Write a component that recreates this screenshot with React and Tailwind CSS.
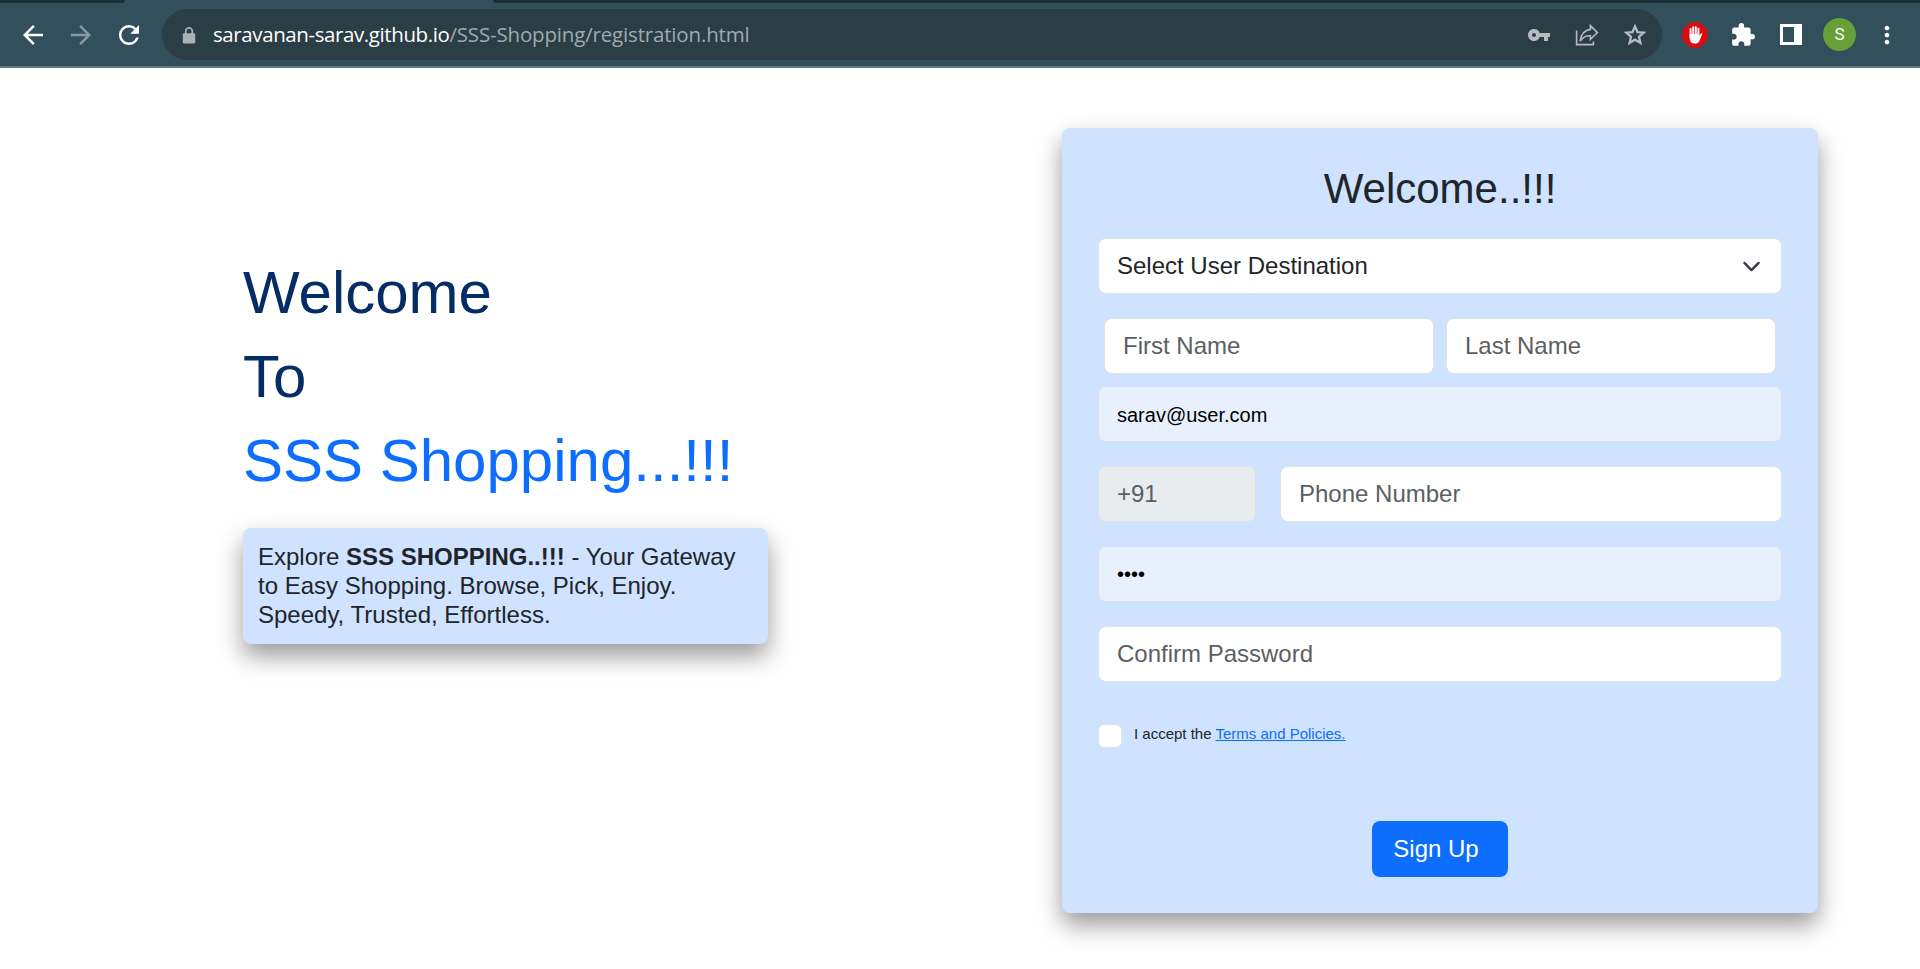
import React from "react";
import { MdArrowBack, MdArrowForward, MdRefresh, MdVpnKey, MdExtension, MdMoreVert } from "react-icons/md";

const field = "h-14 w-full rounded-lg border border-[#dee2e6] bg-white px-[18px] text-2xl text-[#212529] placeholder:text-[#5b5f63] outline-none";

function LockIcon() {
  return (
    <svg className="h-[18px] w-[18px]" viewBox="0 0 18 18">
      <rect x="2.8" y="7.2" width="12.4" height="10.4" rx="1.4" fill="#a9b2b6" />
      <path d="M5.7 8V5.2a3.3 3.3 0 0 1 6.6 0V8" fill="none" stroke="#a9b2b6" strokeWidth="1.7" />
    </svg>
  );
}

function ShareIcon() {
  return (
    <svg className="h-6 w-6" viewBox="0 0 24 24" fill="none" stroke="#b4bcc0" strokeWidth="1.6">
      <path d="M1.6 7.6V21.6H18.4V18.4" />
      <path d="M15.4 2.6L22.4 9.6L15.4 16.4V12.8C11 12.4 8 14 5.2 18C6 11.8 9.5 7.2 15.4 6.4Z" strokeLinejoin="miter" />
    </svg>
  );
}

function StarIcon() {
  return (
    <svg className="h-[26px] w-[26px]" viewBox="0 0 24 24" fill="none" stroke="#b4bcc0" strokeWidth="2.1">
      <path d="M12 4L14.3 9.3L20.1 9.8L15.7 13.6L17 19.3L12 16.3L7 19.3L8.3 13.6L3.9 9.8L9.7 9.3Z" />
    </svg>
  );
}

function BlockerIcon() {
  return (
    <svg className="h-[26px] w-[26px]" viewBox="0 0 26 26">
      <path d="M8 0.6H18L25.4 8V18L18 25.4H8L0.6 18V8Z" fill="#dd0b0f" />
      <g stroke="#fff" strokeWidth="1.9" strokeLinecap="round">
        <path d="M8.6 7V15M11.2 5.2V15M13.8 5.2V15M16.4 6.6V15" />
      </g>
      <path d="M7.65 12H17.35V14L19 11.6Q20.6 10.8 20.2 12.2L17.6 18.4Q16 21.6 12.8 21.6Q7.65 21.6 7.65 16Z" fill="#fff" />
    </svg>
  );
}

function BrowserBar() {
  return (
    <header className="flex h-[68px] flex-col border-b-2 border-[#647881] bg-[#32505b]">
      <div className="flex h-[3px] justify-between">
        <div className="w-[125px] rounded-br-[4px] bg-[#1b2f36]" />
        <div className="w-[1427px] rounded-bl-[4px] bg-[#1b2f36]" />
      </div>
      <div className="mt-[6px] flex h-[51px] items-center">
        <div className="flex w-[162px] items-center pl-[18px]">
          <MdArrowBack className="h-[30px] w-[30px] text-white" />
          <MdArrowForward className="ml-[18px] h-[30px] w-[30px] text-[#8799a0]" />
          <MdRefresh className="ml-[18px] h-[30px] w-[30px] text-white" />
        </div>
        <div className="flex h-[51px] w-[1500px] items-center rounded-full bg-[#2b3d45] pl-[18px]">
          <LockIcon />
          <div className="ml-[15px] flex-1 whitespace-nowrap font-['Open_Sans',sans-serif] text-[20.5px] text-[#9eabb0]">
            <span className="tracking-[-0.4px] text-white">saravanan-sarav.github.io</span>
            <span className="tracking-[-0.17px]">/SSS-Shopping/registration.html</span>
          </div>
          <MdVpnKey className="h-6 w-6 text-[#b4bcc0]" />
          <div className="ml-6"><ShareIcon /></div>
          <div className="mr-[14px] ml-[23px]"><StarIcon /></div>
        </div>
        <div className="ml-5"><BlockerIcon /></div>
        <MdExtension className="ml-[22px] h-[26px] w-[26px] text-white" />
        <div className="ml-[24px] h-[21px] w-[22px] border-[3px] border-r-[8px] border-white" />
        <div className="ml-[21px] flex h-[33px] w-[33px] items-center justify-center rounded-full bg-[#689f38] font-[Roboto,sans-serif] text-[17px] text-white">S</div>
        <MdMoreVert className="ml-[17px] h-7 w-7 text-white" />
      </div>
    </header>
  );
}

export default function App() {
  return (
    <div className="h-[969px] w-[1920px] overflow-hidden bg-white font-['Liberation_Sans',Arial,sans-serif] text-[#212529]">
      <BrowserBar />
      <main className="flex">
        <section className="ml-[243px] w-[525px] pt-[183px]">
          <h1 className="text-[60px] leading-[84px] text-[#052c65]">
            Welcome
            <br />
            To
            <br />
            <span className="text-[#0d6efd]">SSS Shopping...!!!</span>
          </h1>
          <p className="mt-[25px] rounded-lg bg-[#cfe2ff] p-[15px] text-2xl leading-[28.8px] shadow-[0_12px_24px_rgba(0,0,0,0.4)]">
            Explore <b>SSS SHOPPING..!!!</b> - Your Gateway
            <br />
            to Easy Shopping. Browse, Pick, Enjoy.
            <br />
            Speedy, Trusted, Effortless.
          </p>
        </section>
        <form className="mt-[60px] ml-[294px] flex h-[785px] w-[756px] flex-col rounded-lg bg-[#cfe2ff] px-9 shadow-[0_12px_24px_rgba(0,0,0,0.4)]">
          <h2 className="mt-9 h-[74px] text-center text-[42px] leading-[50px]">Welcome..!!!</h2>
          <div className={field + " flex shrink-0 items-center justify-between"}>
            <span>Select User Destination</span>
            <svg className="mr-[2px] h-[19px] w-[19px]" viewBox="0 0 16 16" fill="none" stroke="#343a40" strokeWidth="2" strokeLinecap="round" strokeLinejoin="round">
              <path d="m2 5 6 6 6-6" />
            </svg>
          </div>
          <div className="mt-6 flex gap-3 px-[6px]">
            <input className={field} placeholder="First Name" />
            <input className={field} placeholder="Last Name" />
          </div>
          <div className="mt-3 flex h-14 shrink-0 items-center rounded-lg border border-[#dee2e6] bg-[#e8f0fe] px-[18px] pt-[2px] text-xl text-black">sarav@user.com</div>
          <div className="mt-6 flex gap-6">
            <div className="flex h-14 w-[158px] shrink-0 items-center rounded-lg border border-[#dee2e6] bg-[#e9ecef] px-[18px] text-2xl text-[#5b5f63]">+91</div>
            <input className={field} placeholder="Phone Number" />
          </div>
          <div className="mt-6 flex h-14 shrink-0 items-center rounded-lg border border-[#dee2e6] bg-[#e8f0fe] px-[18px] text-xl text-black">••••</div>
          <input className={field + " mt-6 shrink-0"} placeholder="Confirm Password" />
          <div className="mt-[42px] flex h-6 items-start">
            <div className="h-6 w-6 rounded-[6px] border border-[#dee2e6] bg-white" />
            <span className="ml-3 text-[15px] leading-5">
              I accept the <a className="text-[#0d6efd] underline">Terms and Policies.</a>
            </span>
          </div>
          <button type="button" className="mt-[73px] h-14 w-[136px] self-center rounded-lg bg-[#0d6efd] pr-2 text-2xl text-white">Sign Up</button>
        </form>
      </main>
    </div>
  );
}
